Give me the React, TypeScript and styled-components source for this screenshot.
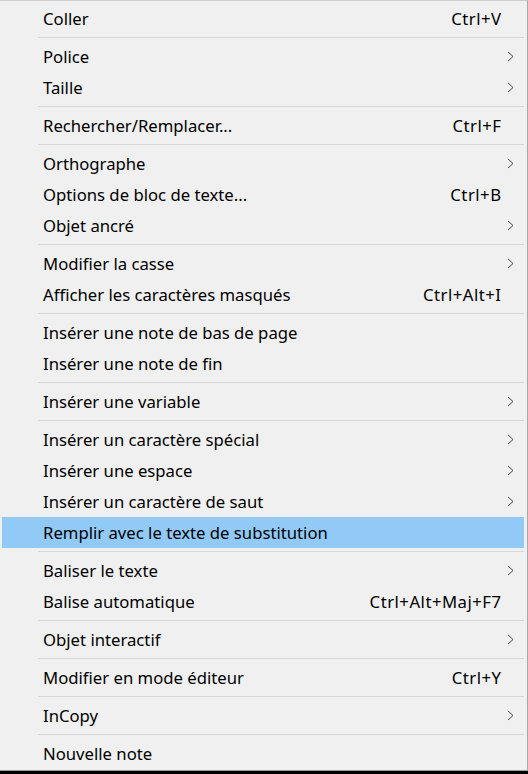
import React from "react";
import styled, { createGlobalStyle } from "styled-components";

const Global = createGlobalStyle`
  html, body { margin: 0; padding: 0; background: #000; }
  body { width: 528px; height: 774px; overflow: hidden; }
`;

const Menu = styled.div`
  box-sizing: border-box;
  width: 528px;
  height: 771px;
  background: #f0f0f0;
  border-top: 1px solid #cdcdcd;
  border-right: 1px solid #a8a8a8;
  border-bottom: 1px solid #9a9a9a;
  padding: 2px 3px 1px 2px;
  display: flex;
  flex-direction: column;
  font-family: "Segoe UI", "Noto Sans", sans-serif;
  font-size: 16.7px;
  color: #000;
`;

const Item = styled.div<{ $active?: boolean }>`
  height: 31px;
  display: grid;
  grid-template-columns: 1fr auto 23px;
  align-items: center;
  padding-left: 41px;
  background: ${(p) => (p.$active ? "#91c9f7" : "transparent")};
`;

const Label = styled.span`
  white-space: nowrap;
`;

const Shortcut = styled.span`
  white-space: nowrap;
  text-align: right;
  letter-spacing: 0.5px;
  margin-right: -0.5px;
`;

const ArrowCell = styled.span`
  display: flex;
  align-items: center;
  padding-left: 6px;
`;

const Separator = styled.div`
  height: 1px;
  margin: 3px 0 3px 36px;
  background: #d7d7d7;
`;

type Entry =
  | { sep: true }
  | { label: string; shortcut?: string; sub?: boolean; active?: boolean };

const entries: Entry[] = [
  { label: "Coller", shortcut: "Ctrl+V" },
  { sep: true },
  { label: "Police", sub: true },
  { label: "Taille", sub: true },
  { sep: true },
  { label: "Rechercher/Remplacer...", shortcut: "Ctrl+F" },
  { sep: true },
  { label: "Orthographe", sub: true },
  { label: "Options de bloc de texte...", shortcut: "Ctrl+B" },
  { label: "Objet ancré", sub: true },
  { sep: true },
  { label: "Modifier la casse", sub: true },
  { label: "Afficher les caractères masqués", shortcut: "Ctrl+Alt+I" },
  { sep: true },
  { label: "Insérer une note de bas de page" },
  { label: "Insérer une note de fin" },
  { sep: true },
  { label: "Insérer une variable", sub: true },
  { sep: true },
  { label: "Insérer un caractère spécial", sub: true },
  { label: "Insérer une espace", sub: true },
  { label: "Insérer un caractère de saut", sub: true },
  { label: "Remplir avec le texte de substitution", active: true },
  { sep: true },
  { label: "Baliser le texte", sub: true },
  { label: "Balise automatique", shortcut: "Ctrl+Alt+Maj+F7" },
  { sep: true },
  { label: "Objet interactif", sub: true },
  { sep: true },
  { label: "Modifier en mode éditeur", shortcut: "Ctrl+Y" },
  { sep: true },
  { label: "InCopy", sub: true },
  { sep: true },
  { label: "Nouvelle note" },
];

const Chevron = () => (
  <svg width="7" height="11" viewBox="0 0 7 11">
    <polyline points="1,1 6,5.5 1,10" fill="none" stroke="#444" strokeWidth="1" />
  </svg>
);

export default function App() {
  return (
    <>
      <Global />
      <Menu>
        {entries.map((e, i) =>
          "sep" in e ? (
            <Separator key={i} />
          ) : (
            <Item key={i} $active={e.active}>
              <Label>{e.label}</Label>
              <Shortcut>{e.shortcut ?? ""}</Shortcut>
              <ArrowCell>{e.sub ? <Chevron /> : null}</ArrowCell>
            </Item>
          )
        )}
      </Menu>
    </>
  );
}
